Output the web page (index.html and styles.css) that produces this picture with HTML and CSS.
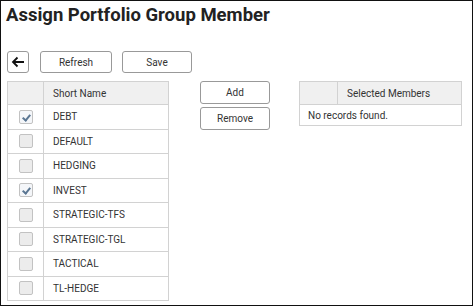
FILE: index.html
```html
<!DOCTYPE html>
<html lang="en">
<head>
    <meta charset="UTF-8">
    <title>Assign Portfolio Group Member</title>
    <link rel="stylesheet" href="styles.css">
</head>
<body>
    <div class="frame">
        <h1 class="title">Assign Portfolio Group Member</h1>

        <div class="toolbar">
            <button class="btn back-btn" title="Back">
                <svg width="14" height="12" viewBox="0 0 14 12">
                    <path d="M13 6H2M6.5 1.5L2 6l4.5 4.5" fill="none" stroke="#111" stroke-width="1.8"/>
                </svg>
            </button>
            <button class="btn">Refresh</button>
            <button class="btn">Save</button>
        </div>

        <div class="content">
            <table class="grid members">
                <thead>
                    <tr>
                        <th class="check-col"></th>
                        <th>Short Name</th>
                    </tr>
                </thead>
                <tbody>
                    <tr><td class="check-col"><span class="check checked"></span></td><td>DEBT</td></tr>
                    <tr><td class="check-col"><span class="check"></span></td><td>DEFAULT</td></tr>
                    <tr><td class="check-col"><span class="check"></span></td><td>HEDGING</td></tr>
                    <tr><td class="check-col"><span class="check checked"></span></td><td>INVEST</td></tr>
                    <tr><td class="check-col"><span class="check"></span></td><td>STRATEGIC-TFS</td></tr>
                    <tr><td class="check-col"><span class="check"></span></td><td>STRATEGIC-TGL</td></tr>
                    <tr><td class="check-col"><span class="check"></span></td><td>TACTICAL</td></tr>
                    <tr><td class="check-col"><span class="check"></span></td><td>TL-HEDGE</td></tr>
                </tbody>
            </table>

            <div class="move-buttons">
                <button class="btn">Add</button>
                <button class="btn">Remove</button>
            </div>

            <table class="grid selected">
                <thead>
                    <tr>
                        <th class="check-col"></th>
                        <th>Selected Members</th>
                    </tr>
                </thead>
                <tbody>
                    <tr class="empty-row"><td colspan="2">No records found.</td></tr>
                </tbody>
            </table>
        </div>
    </div>
</body>
</html>
```

FILE: styles.css
```css
body {
    margin: 0;
    padding: 0;
    background-color: #fff;
    font-family: Roboto, "Liberation Sans", Arial, sans-serif;
    color: #333;
}

.frame {
    width: 473px;
    height: 306px;
    box-sizing: border-box;
    border: 1px solid #111;
    padding: 0 6px;
}

.title {
    margin: 0 0 0 -1px;
    padding-top: 2px;
    font-size: 18.5px;
    font-weight: 700;
    line-height: 24px;
    color: #222;
}

/* Toolbar */
.toolbar {
    display: flex;
    gap: 10px;
    margin-top: 24px;
}

.btn {
    height: 22px;
    width: 72px;
    padding: 0;
    background-color: #fff;
    border: 1px solid #999;
    border-radius: 3px;
    font-family: Roboto, "Liberation Sans", Arial, sans-serif;
    font-size: 10px;
    color: #333;
    cursor: pointer;
}

.back-btn {
    width: 22px;
    margin-right: 1px;
    display: flex;
    align-items: center;
    justify-content: center;
}

.toolbar .btn + .btn + .btn {
    width: 70px;
}

/* Content */
.content {
    display: flex;
    align-items: flex-start;
    margin-top: 8px;
}

.grid {
    border-collapse: collapse;
    font-size: 10px;
    color: #333;
}

.grid th,
.grid td {
    border: 1px solid #d2d2d2;
    padding: 0 0 0 9px;
    text-align: left;
    font-weight: 400;
}

.grid th {
    height: 22px;
    background-color: #f0f0f0;
}

.grid .check-col {
    padding: 0;
    text-align: center;
}

.members {
    width: 162px;
}

.members .check-col {
    width: 35px;
}

.members td {
    height: 23.5px;
}

.check {
    display: inline-block;
    width: 14px;
    height: 14px;
    box-sizing: border-box;
    border: 1px solid #c2c2c2;
    border-radius: 2px;
    background-color: #ececec;
    vertical-align: middle;
    position: relative;
}

.check.checked {
    background-color: #f4f6f9;
}

.check.checked::after {
    content: "";
    position: absolute;
    left: 4px;
    top: 2px;
    width: 3px;
    height: 6px;
    border: solid #5a7692;
    border-width: 0 2px 2px 0;
    transform: rotate(40deg);
}

.move-buttons {
    display: flex;
    flex-direction: column;
    gap: 3px;
    margin-left: 31px;
    margin-right: 29px;
}

.move-buttons .btn {
    width: 70px;
    height: 23px;
}

.selected {
    width: 163px;
}

.selected .check-col {
    width: 37px;
}

.empty-row td {
    height: 20px;
    padding-left: 8px;
}
```
